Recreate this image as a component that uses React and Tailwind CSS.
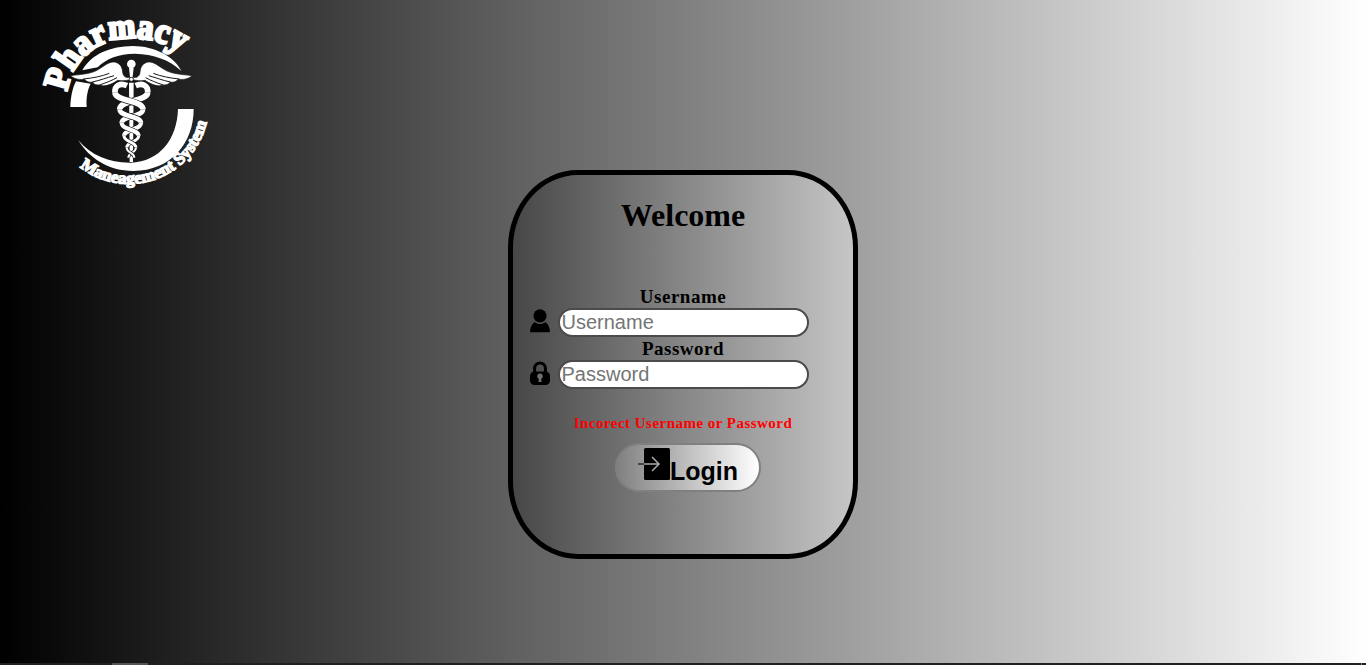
const SNAKE_TURNS = [
  { y1: 262, y2: 313, r1: 49, r2: 35, w: 17 },
  { y1: 313, y2: 354, r1: 35, r2: 29, w: 14 },
  { y1: 354, y2: 393, r1: 29, r2: 22, w: 12 },
  { y1: 393, y2: 428, r1: 22, r2: 14, w: 9 },
  { y1: 428, y2: 458, r1: 14, r2: 9, w: 6 },
];

const CENTER = 304;

function strand({ y1, y2, r1, r2 }, side) {
  const mid = (y1 + y2) / 2;
  const x1 = CENTER + side * r1;
  const x2 = CENTER - side * r2;
  return `M${x1} ${y1 - 0.5} C${x1} ${mid + 3} ${x2} ${mid - 3} ${x2} ${y2 + 0.5}`;
}

function Snakes() {
  return (
    <g fill="none">
      <path d="M255 263 C253 240 272 233 291 242" stroke="white" strokeWidth="17" />
      <path d="M353 263 C355 240 336 233 317 242" stroke="white" strokeWidth="17" />
      {SNAKE_TURNS.map((turn) => (
        <g key={turn.y1}>
          <path d={strand(turn, 1)} stroke="#171717" strokeWidth={turn.w + 4} />
          <path d={strand(turn, 1)} stroke="white" strokeWidth={turn.w} />
          <path d={strand(turn, -1)} stroke="#171717" strokeWidth={turn.w + 4} />
          <path d={strand(turn, -1)} stroke="white" strokeWidth={turn.w} />
        </g>
      ))}
    </g>
  );
}

function Logo() {
  return (
    <svg viewBox="0 0 570 570" className="size-[190px] shrink-0" fill="white">
      <defs>
        <path id="top-arc" d="M112 260 C120 172 200 101 290 100 C350 98 410 105 484 168" />
        <path id="bottom-arc" d="M149 486 A240 240 0 0 0 533 338" />
      </defs>
      <text fontFamily="Liberation Serif" fontWeight="700" fontSize="108" stroke="white" strokeWidth="8">
        <textPath href="#top-arc" textLength="432" lengthAdjust="spacingAndGlyphs">Pharmacy</textPath>
      </text>
      <text fontFamily="Liberation Serif" fontWeight="700" fontSize="51" stroke="white" strokeWidth="4">
        <textPath href="#bottom-arc" textLength="480" lengthAdjust="spacingAndGlyphs">Maneagement System</textPath>
      </text>
      <path d="M157 196 C185 146 242 124 308 123 C375 123 435 156 454 198 C420 165 370 147 315 146 C265 146 225 163 203 187 Z" />
      <path d="M138 229 L182 236 C172 255 168 280 170 306 L121 306 C122 277 127 250 138 229 Z" />
      <path d="M444 312 L491 312 C491 415 423 497 310 498 C235 498 178 460 145 406 C183 452 240 474 302 473 C390 470 441 402 444 312 Z" />
      <g id="wing">
        <path d="M299 217 C288 220 279 214 278 202 C277 183 267 173 252 171 C237 170 224 182 206 193 C185 207 153 208 122 212 C135 224 151 224 164 223 C168 231 180 233 188 231 C190 239 202 241 211 239 C219 247 243 240 263 226 C276 228 288 227 299 224 Z" stroke="#171717" strokeWidth="2" />
        <path d="M160 222 C190 219 215 214 238 205 M187 231 C211 226 230 218 252 212 M211 239 C230 233 246 226 261 218" fill="none" stroke="#171717" strokeWidth="3" />
      </g>
      <use href="#wing" transform="translate(608 0) scale(-1 1)" />
      <circle cx="304" cy="177" r="13" />
      <path d="M297 188 H311 L308 216 H300 Z M297 233 H311 L309 471 H299 Z" />
      <circle cx="304" cy="223" r="6" stroke="#171717" strokeWidth="2" />
      <Snakes />
    </svg>
  );
}

function UserIcon() {
  return (
    <svg viewBox="0 0 20 24" className="relative -top-0.5 h-6 w-5 shrink-0">
      <circle cx="10" cy="6.8" r="6.6" />
      <path d="M0 23.3 C0 18.5 2 14.8 4.6 13 C8 15.8 12 15.8 15.4 13 C18 14.8 20 18.5 20 23.3 Z" />
    </svg>
  );
}

function LockIcon() {
  return (
    <svg viewBox="0 0 20 24" className="relative -top-0.5 h-6 w-5 shrink-0">
      <path d="M4.6 12 V7.5 A5.4 5.4 0 0 1 15.4 7.5 V12" fill="none" stroke="black" strokeWidth="3" />
      <rect y="10.5" width="20" height="13.5" rx="4.5" />
      <circle cx="10" cy="15.3" r="2.7" fill="#707070" />
      <path d="M9 16 H11 L11.5 21 H8.5 Z" fill="#707070" />
    </svg>
  );
}

function LoginIcon() {
  return (
    <svg viewBox="0 0 32 32" className="size-8 shrink-0" fill="none">
      <rect x="6" width="26" height="32" rx="1.5" fill="black" />
      <path d="M0 16 H6" stroke="#333" strokeWidth="1.6" />
      <path d="M6 16 H21 M14 9 L21 16 L14 23" stroke="#aaa" strokeWidth="1.5" />
    </svg>
  );
}

function Field({ label, type, icon }) {
  return (
    <div className="h-[52px]">
      <label htmlFor={label} className="block h-[22px] text-center text-[19px] leading-[22px] font-bold tracking-[0.5px]">
        {label}
      </label>
      <div className="flex h-[29px] items-center gap-2 pl-[17px]">
        {icon}
        <input
          id={label}
          type={type}
          placeholder={label}
          className="h-[29px] w-[251px] rounded-[15px] border-2 border-[#4c4a4a] bg-white px-[1.5px] font-['Liberation_Sans',sans-serif] text-[20px] leading-[23px] placeholder:text-[#757575]"
        />
      </div>
    </div>
  );
}

export default function App() {
  return (
    <main className="flex h-[665px] flex-col overflow-hidden bg-linear-to-r from-black to-white font-['Liberation_Serif',serif] text-black [--tw-gradient-position:to_right]">
      <div className="flex flex-1 items-start">
        <div className="w-[508px] pt-[5px] pl-[30px]">
          <Logo />
        </div>
        <section className="mt-[170px] flex h-[389px] w-[350px] flex-col rounded-[20%] border-[5px] border-black bg-linear-to-r from-[#474747] to-[#c6c6c6] [--tw-gradient-position:to_right]">
          <h1 className="mt-[22px] text-center text-[32px] leading-[37px] font-bold">Welcome</h1>
          <form className="mt-[52px] flex flex-col" onSubmit={(e) => e.preventDefault()}>
            <Field label="Username" type="text" icon={<UserIcon />} />
            <Field label="Password" type="password" icon={<LockIcon />} />
            <p className="mt-6 text-center text-[15px] leading-[18px] font-bold tracking-[0.47px] text-[#ff0000]">
              Incorect Username or Password
            </p>
            <button className="mt-[11px] ml-[102px] flex h-[49px] w-[146px] items-start rounded-[25px] border-2 border-[#808080] bg-linear-to-r from-[#808080] to-white pt-[3px] pl-[21px] font-['Liberation_Sans',sans-serif] text-[25px] font-bold [--tw-gradient-position:to_right]">
              <LoginIcon />
              <span className="mt-[9px] leading-[29px]">Login</span>
            </button>
          </form>
        </section>
      </div>
      <footer className="flex h-0.5 bg-[#231f20]">
        <span className="ml-28 w-9 bg-[#565354]" />
        <span className="mr-1 ml-auto w-px bg-[#777]" />
      </footer>
    </main>
  );
}
